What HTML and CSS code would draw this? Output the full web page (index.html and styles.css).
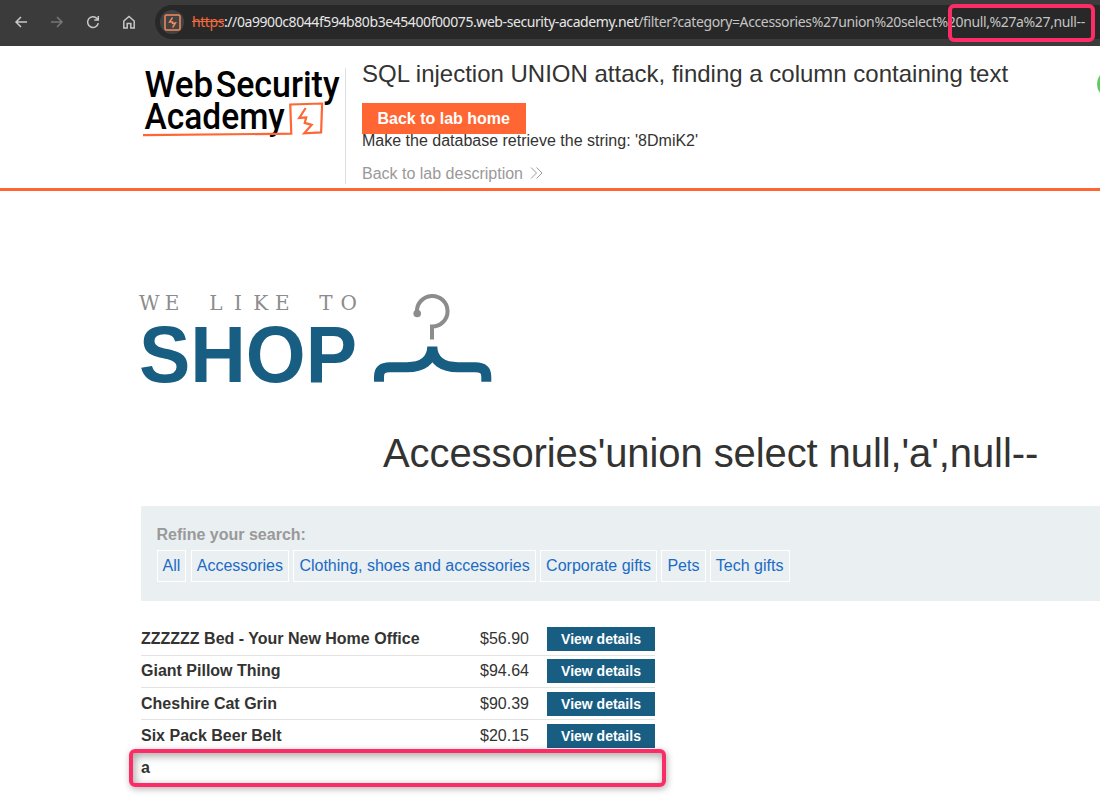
FILE: index.html
```
<!DOCTYPE html>
<html lang="en">
<head>
  <meta charset="utf-8">
  <title>SQL injection UNION attack, finding a column containing text</title>
  <link rel="stylesheet" href="styles.css">
</head>
<body>
  <div class="browser-bar">
    <div class="nav">
      <svg width="14" height="14" viewBox="0 0 14 14"><path d="M13 7H2M7 2L2 7l5 5"/></svg>
      <svg class="off" width="14" height="14" viewBox="0 0 14 14"><path d="M1 7h11M7 2l5 5-5 5"/></svg>
      <svg width="14" height="14" viewBox="0 0 14 14"><path d="M12.3 8.2A5.4 5.4 0 1 1 11 3.4l1 1.2M12.3 1v4H8.3"/></svg>
      <svg width="14" height="14" viewBox="0 0 14 14"><path d="M1.8 6L7 1.5 12.2 6v7H8.8V8.6H5.2V13H1.8z"/></svg>
    </div>
    <div class="address">
      <span class="site-icon">
        <svg width="17" height="17" viewBox="0 0 17 17"><rect x="1" y="1" width="15" height="15" rx="1.5"/><path class="bolt" d="M8.600 3.500L5.500 8h3v1.500l3-.5L8.600 13.500"/></svg>
      </span>
      <span class="url"><s>https</s>://0a9900c8044f594b80b3e45400f00075.web-security-academy.net<span class="path">/filter?category=Accessories%27union%20select%20null,%27a%27,null--</span></span>
    </div>
    <div class="mark mark-url"></div>
  </div>

  <header class="lab-header">
    <svg class="academy-logo" width="204" height="76" viewBox="0 0 204 76">
      <g class="logo-text">
        <text x="2.500" y="28.700" textLength="69" lengthAdjust="spacingAndGlyphs">Web</text>
        <text x="74" y="28.700" textLength="124.500" lengthAdjust="spacingAndGlyphs">Security</text>
        <text x="2.500" y="61.200" textLength="141" lengthAdjust="spacingAndGlyphs">Academy</text>
      </g>
      <path class="logo-line" d="M1 67.300L150 65.800 149 36.500 181 35.500 180 64.500 163 65.500 170.500 57 163.500 55 165 49.500 158 50 164.500 40"/>
    </svg>
    <div class="lab-info">
      <h2>SQL injection UNION attack, finding a column containing text</h2>
      <a class="home-btn">Back to lab home</a>
      <p class="hint">Make the database retrieve the string: '8DmiK2'</p>
      <a class="desc-link">Back to lab description
        <svg width="13" height="12" viewBox="0 0 13 12"><path d="M1 .5L6.500 6 1 11.500M6.500 .5L12 6 6.500 11.500"/></svg>
      </a>
    </div>
    <div class="status"></div>
  </header>

  <main class="container">
    <svg class="shop-logo" width="352" height="92" viewBox="0 0 352 92">
      <g class="like">
        <text x="8.200 31" y="16.500">WE</text>
        <text x="74.800 97 119.700 141.300" y="16.500">LIKE</text>
        <text x="185 207.700" y="16.500">TO</text>
      </g>
      <text class="shop" x="-2" y="88.700" textLength="218" lengthAdjust="spacingAndGlyphs">SHOP</text>
      <circle cx="276.200" cy="20.500" r="3.800" fill="#8c8c8c"/>
      <path class="hook" d="M276 19.500A15.300 15.300 0 1 1 291 33.500V46.500"/>
      <path class="hanger" d="M238 88.700v-5c0-7 4-9.500 11-9.500h17c15 0 25-6 25.300-20.500C291.600 68.200 302 74.200 317 74.200h17c7 0 11.300 2.500 11.300 9.500v5"/>
    </svg>
    <h1>Accessories'union select null,'a',null--</h1>
    <section class="filters">
      <label>Refine your search:</label>
      <div class="filter-links">
        <a>All</a>
        <a>Accessories</a>
        <a>Clothing, shoes and accessories</a>
        <a>Corporate gifts</a>
        <a>Pets</a>
        <a>Tech gifts</a>
      </div>
    </section>
    <div class="products">
      <div class="row"><b>ZZZZZZ Bed - Your New Home Office</b><span>$56.90</span><a>View details</a></div>
      <div class="row"><b>Giant Pillow Thing</b><span>$94.64</span><a>View details</a></div>
      <div class="row"><b>Cheshire Cat Grin</b><span>$90.39</span><a>View details</a></div>
      <div class="row"><b>Six Pack Beer Belt</b><span>$20.15</span><a>View details</a></div>
      <div class="row"><b>a</b></div>
      <div class="mark mark-row"></div>
    </div>
  </main>
</body>
</html>
```
FILE: styles.css
```
* {
  box-sizing: border-box;
}

body {
  margin: 0;
  height: 806px;
  overflow: hidden;
  background: #fff;
  color: #333332;
  font: 16px/20px "Liberation Sans", Arial, sans-serif;
}

svg {
  display: block;
  fill: none;
}

h1, h2, p {
  margin: 0;
  font-weight: normal;
}

/* browser toolbar */
.browser-bar {
  position: relative;
  display: flex;
  height: 46px;
  padding: 5px 0 7px 14px;
  background: #3b3b3b;
}

.nav {
  display: flex;
  align-items: center;
  gap: 22px;
  width: 141px;
}

.nav svg {
  stroke: #c8c8c8;
  stroke-width: 1.5;
}

.nav .off {
  stroke: #777;
}

.address {
  display: flex;
  flex: 1;
  align-items: center;
  padding-left: 5px;
  border-radius: 17px 0 0 17px;
  background: #282828;
  white-space: nowrap;
}

.site-icon {
  display: flex;
  align-items: center;
  justify-content: center;
  width: 24px;
  height: 24px;
  margin-right: 8px;
  border-radius: 50%;
  background: #424242;
}

.site-icon svg {
  stroke: #f58a5e;
  stroke-width: 1.5;
}

.site-icon .bolt {
  stroke-width: 1.4;
}

.url {
  color: #e6e6e6;
  font: 14px/20px "Noto Sans", "Open Sans", sans-serif;
  letter-spacing: -0.42px;
}

.url s {
  color: #f4693e;
}

.url .path {
  color: #c4c4c4;
  letter-spacing: -0.37px;
}

.mark {
  position: absolute;
  border: 4px solid #fb2c66;
  border-radius: 6px;
}

.mark-url {
  left: 948px;
  top: 4px;
  width: 147px;
  height: 38px;
}

/* lab header */
.lab-header {
  position: relative;
  display: flex;
  height: 145px;
  padding-left: 142px;
  overflow: hidden;
  border-bottom: 3px solid #ff6633;
}

.academy-logo {
  height: 116px;
  margin-top: 22px;
  padding-bottom: 40px;
  border-right: 1px solid #dfdfdf;
}

.logo-text {
  fill: #000;
  font: 38px Roboto, sans-serif;
  font-weight: 500;
}

.logo-line {
  stroke: #ff6633;
  stroke-width: 2.2;
}

.lab-info {
  display: flex;
  flex-direction: column;
  align-items: flex-start;
  padding: 14px 0 0 16px;
}

.lab-info h2 {
  height: 43px;
  font-size: 24px;
  line-height: 28px;
  white-space: nowrap;
}

.home-btn {
  height: 31px;
  padding: 0 16.500px 0 15.500px;
  background: #ff6633;
  color: #fff;
  font-weight: bold;
  line-height: 31px;
}

.hint {
  margin-top: -3px;
}

.desc-link {
  display: flex;
  align-items: center;
  gap: 7px;
  margin-top: 13px;
  color: #999;
}

.desc-link svg {
  margin-top: -2px;
  stroke: #999;
}

.status {
  position: absolute;
  left: 1097px;
  top: 23px;
  width: 30px;
  height: 30px;
  border-radius: 50%;
  background: #5ecb61;
}

/* shop */
.container {
  margin-left: 141px;
  padding-top: 102px;
}

.shop-logo {
  overflow: visible;
}

.like {
  fill: #8c8c8c;
  font: 20px "DejaVu Serif", serif;
  text-anchor: middle;
}

.shop {
  fill: #185d82;
  font: bold 80px "Liberation Sans", Arial, sans-serif;
}

.hook {
  stroke: #8c8c8c;
  stroke-width: 4;
}

.hanger {
  stroke: #185d82;
  stroke-width: 10;
}

h1 {
  height: 121px;
  padding: 45px 0 0 242px;
  font-size: 40px;
  line-height: 46px;
  letter-spacing: -0.09px;
  white-space: nowrap;
}

.filters {
  height: 95px;
  padding: 19px 15.500px;
  background: #eaeff2;
}

.filters label {
  display: block;
  color: #999;
  font-weight: bold;
}

.filter-links {
  display: flex;
  gap: 4.2px;
  margin-top: 5px;
}

.filter-links a {
  height: 32px;
  padding: 0 5.1px;
  border: 1px solid #fff;
  color: #1a6bc4;
  line-height: 30px;
}

.products {
  position: relative;
  width: 514px;
  padding-top: 22.500px;
}

.row {
  display: grid;
  grid-template-columns: 339px 67px 108px;
  align-items: center;
  height: 32.3px;
  border-bottom: 1px solid #e3e3e3;
}

.row:nth-child(n+4) {
  border-bottom-color: transparent;
}

.row a {
  height: 24px;
  background: #185d82;
  color: #fff;
  font-size: 14px;
  font-weight: bold;
  line-height: 24px;
  text-align: center;
}

.mark-row {
  left: -12px;
  top: 148px;
  width: 537px;
  height: 38px;
  box-shadow: 1px 2px 7px rgba(0, 0, 0, .3), inset 2px 3px 8px rgba(0, 0, 0, .35);
}
```
